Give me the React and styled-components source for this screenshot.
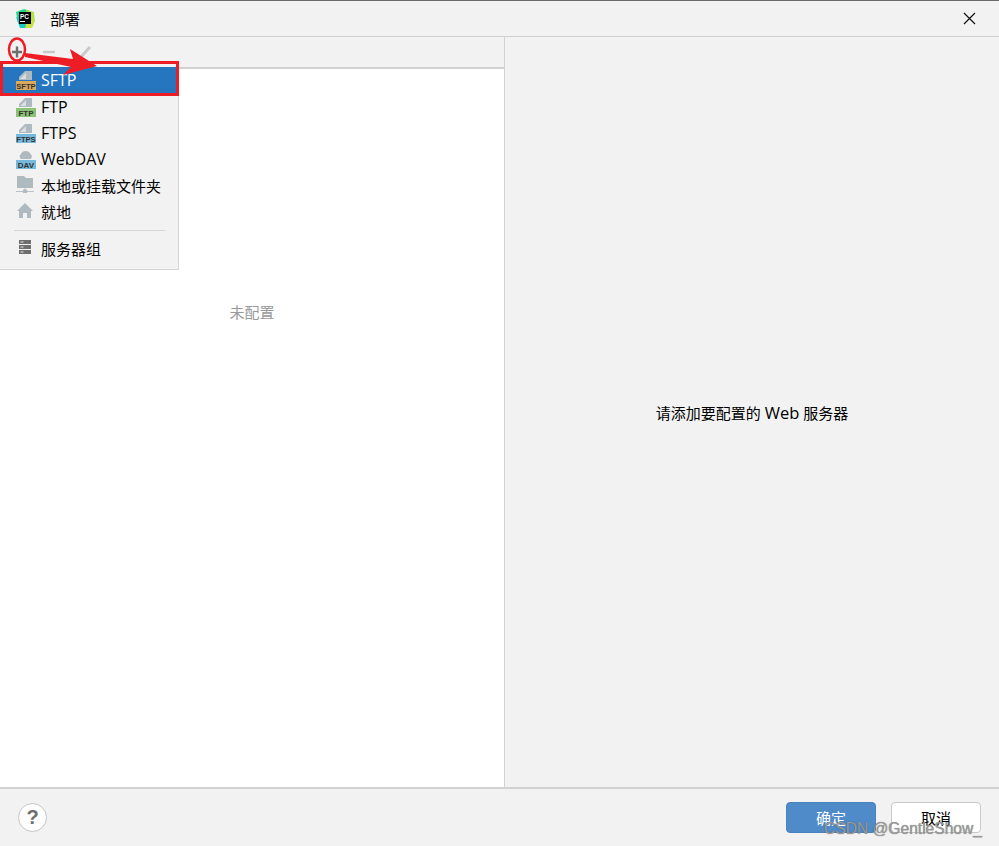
import React from 'react'
import styled, { createGlobalStyle } from 'styled-components'

const GlobalStyle = createGlobalStyle`
  html, body {
    margin: 0;
    padding: 0;
    background: #f2f2f2;
  }
  * {
    box-sizing: border-box;
  }
`

const Dialog = styled.div`
  position: relative;
  width: 999px;
  height: 846px;
  display: flex;
  flex-direction: column;
  overflow: hidden;
  background: #f2f2f2;
  border-top: 1px solid #6b6b6b;
  color: #000;
  font-family: "Open Sans", "Noto Sans CJK SC", sans-serif;
  font-size: 15px;
`

const TitleBar = styled.div`
  height: 36px;
  flex: none;
  display: flex;
  align-items: center;
  padding: 0 23px 0 15px;
  border-bottom: 1px solid #d1d1d1;
`

const TitleText = styled.span`
  margin-left: 15px;
  flex: 1;
`

const Body = styled.div`
  flex: 1;
  display: flex;
  min-height: 0;
`

const LeftPane = styled.div`
  width: 505px;
  flex: none;
  display: flex;
  flex-direction: column;
  border-right: 1px solid #d1d1d1;
`

const Toolbar = styled.div`
  height: 32px;
  flex: none;
  display: flex;
  align-items: center;
  gap: 16px;
  padding-left: 9px;
  border-bottom: 2px solid #d1d1d1;
`

const ServerList = styled.div`
  flex: 1;
  background: #fff;
  padding-top: 232px;
  text-align: center;
  color: #999;
`

const RightPane = styled.div`
  flex: 1;
  display: flex;
  align-items: center;
  justify-content: center;
  white-space: pre;
`

const LatinWord = styled.span`
  font-size: 16.5px;
`

const Footer = styled.div`
  height: 59px;
  flex: none;
  display: flex;
  align-items: center;
  padding: 0 18px;
  border-top: 2px solid #d1d1d1;
`

const HelpButton = styled.div`
  width: 29px;
  height: 29px;
  border: 1.5px solid #c4c4c4;
  border-radius: 50%;
  background: #fff;
  color: #6e6e6e;
  display: flex;
  align-items: center;
  justify-content: center;
  font-family: "Liberation Sans", sans-serif;
  font-weight: 700;
  font-size: 20px;
`

const ButtonRow = styled.div`
  margin-left: auto;
  display: flex;
  gap: 15px;
`

const DialogButton = styled.div`
  width: 90px;
  height: 31px;
  border-radius: 4px;
  display: flex;
  align-items: center;
  justify-content: center;
  border: 1px solid ${p => (p.$primary ? '#4a82bd' : '#c9c9c9')};
  background: ${p => (p.$primary ? '#4f8ac9' : '#fff')};
  color: ${p => (p.$primary ? '#fff' : '#000')};
`

const Menu = styled.div`
  position: absolute;
  left: 0;
  top: 63px;
  width: 179px;
  height: 206px;
  display: flex;
  flex-direction: column;
  padding-top: 3px;
  background: #f2f2f2;
  border-right: 1px solid #d6d6d6;
  border-bottom: 1px solid #d6d6d6;
`

const MenuItem = styled.div`
  height: 26px;
  flex: none;
  display: flex;
  align-items: center;
  gap: 5px;
  padding-left: 16px;
  margin-bottom: ${p => (p.$active ? 1 : 0)}px;
  font-size: ${p => (p.$latin ? 16 : 15)}px;
  background: ${p => (p.$active ? '#2675bf' : 'transparent')};
  color: ${p => (p.$active ? '#fff' : '#000')};
`

const IconSlot = styled.div`
  width: 20px;
  height: 20px;
  flex: none;
  display: flex;
`

const MenuDivider = styled.div`
  height: 1px;
  flex: none;
  margin: 6px 13px 4px 14px;
  background: #d6d6d6;
`

const SelectedFrame = styled.div`
  position: absolute;
  left: 0;
  top: 60px;
  width: 179px;
  height: 35px;
  border: 3px solid #ee1c25;
  pointer-events: none;
`

const Annotation = styled.svg`
  position: absolute;
  left: 0;
  top: -1px;
  pointer-events: none;
`

const Watermark = styled.div`
  position: absolute;
  left: 824px;
  top: 819px;
  font-family: "Liberation Sans", sans-serif;
  font-size: 15.6px;
  color: #9a9a9a;
  text-shadow: 0 0 1px rgba(70, 70, 70, 0.7);
  white-space: nowrap;
`

const PcLogo = () => (
  <svg width="20" height="20" viewBox="0 0 20 20">
    <path d="M1 3 L9 0 L15 2 L14 10 L3 14 Z" fill="#21d789" />
    <path d="M11 1 L19 3 L20 13 L13 12 Z" fill="#b5e04a" />
    <path d="M1 8 L5 19 L13 19 L8 10 Z" fill="#19c9c2" />
    <path d="M13 10 L20 12 L17 19 L10 19 Z" fill="#c8e23f" />
    <rect x="4" y="3" width="12" height="12" fill="#000" />
    <text x="5" y="9.5" fontFamily="Liberation Sans" fontSize="6.4" fontWeight="700" fill="#fff">PC</text>
    <rect x="5" y="12" width="5" height="1" fill="#fff" />
  </svg>
)

const Plus = () => (
  <svg width="16" height="16" viewBox="0 0 16 16">
    <path d="M8 2.5 V13.5 M3 8 H13" stroke="#6e6e6e" strokeWidth="2.4" />
  </svg>
)

const Minus = () => (
  <svg width="16" height="16" viewBox="0 0 16 16">
    <path d="M2 8 H14" stroke="#c9c9c9" strokeWidth="2.4" />
  </svg>
)

const Pencil = () => (
  <svg width="24" height="16" viewBox="0 0 24 16">
    <path d="M7 14 L17 3" stroke="#c9c9c9" strokeWidth="2.8" />
  </svg>
)

const Close = () => (
  <svg width="13" height="13" viewBox="0 0 13 13">
    <path d="M1 1 L12 12 M12 1 L1 12" stroke="#111" strokeWidth="1.2" />
  </svg>
)

const IconLabel = ({ text, color, size = 7.6 }) => (
  <>
    <rect x="0" y="11" width="20" height="9" fill={color} />
    <text x="10" y="18.6" textAnchor="middle" fontFamily="Liberation Sans" fontWeight="700" fontSize={size} fill="#333">{text}</text>
  </>
)

const ServerIcon = ({ label, color, size }) => (
  <svg width="20" height="20" viewBox="0 0 20 20">
    <path d="M3 10 V7 L9 1 H16 V10 Z" fill="#aeb9c0" />
    <path d="M4 9 L10 3 V9 Z" fill="#d9dee1" />
    <IconLabel text={label} color={color} size={size} />
  </svg>
)

const DavIcon = () => (
  <svg width="20" height="20" viewBox="0 0 20 20">
    <path d="M5 10 a3 3 0 0 1 0 -5 a5 4.5 0 0 1 9.5 0 a3 3 0 0 1 0 5 Z" fill="#aeb9c0" />
    <IconLabel text="DAV" color="#75b9dc" size={8} />
  </svg>
)

const FolderIcon = () => (
  <svg width="20" height="20" viewBox="0 0 20 20">
    <path d="M1 1 H8 L10 3 H17 V13 H1 Z" fill="#aeb9c0" />
    <path d="M9 13 V16 M0 16.5 H18" stroke="#b9c2c8" strokeWidth="1" />
    <rect x="7" y="14.5" width="4" height="3.5" fill="#aeb9c0" />
  </svg>
)

const HomeIcon = () => (
  <svg width="20" height="20" viewBox="0 0 20 20">
    <path d="M9 2 L17 10 H15 V17 H11 V12 H7 V17 H3 V10 H1 Z" fill="#aeb9c0" />
  </svg>
)

const GroupIcon = () => (
  <svg width="20" height="20" viewBox="0 0 20 20">
    <rect x="3" y="2" width="12" height="4" fill="#6e6e6e" />
    <rect x="3" y="7" width="12" height="4" fill="#6e6e6e" />
    <rect x="3" y="12" width="12" height="4" fill="#6e6e6e" />
    <path d="M4.5 4 H7.5 M4.5 9 H7.5 M4.5 14 H7.5" stroke="#e4e4e4" strokeWidth="1" />
  </svg>
)

const menuItems = [
  { label: 'FTP', latin: true, icon: <ServerIcon label="FTP" color="#8cc274" size={8} /> },
  { label: 'FTPS', latin: true, icon: <ServerIcon label="FTPS" color="#75b9dc" /> },
  { label: 'WebDAV', latin: true, icon: <DavIcon /> },
  { label: '本地或挂载文件夹', icon: <FolderIcon /> },
  { label: '就地', icon: <HomeIcon /> },
]

const App = () => {
  return (
    <>
      <GlobalStyle />
      <Dialog>
        <TitleBar>
          <PcLogo />
          <TitleText>部署</TitleText>
          <Close />
        </TitleBar>
        <Body>
          <LeftPane>
            <Toolbar>
              <Plus />
              <Minus />
              <Pencil />
            </Toolbar>
            <ServerList>未配置</ServerList>
          </LeftPane>
          <RightPane>
            <span>请添加要配置的 <LatinWord>Web</LatinWord> 服务器</span>
          </RightPane>
        </Body>
        <Footer>
          <HelpButton>?</HelpButton>
          <ButtonRow>
            <DialogButton $primary>确定</DialogButton>
            <DialogButton>取消</DialogButton>
          </ButtonRow>
        </Footer>

        <Menu>
          <MenuItem $active $latin>
            <IconSlot>
              <ServerIcon label="SFTP" color="#dba95c" />
            </IconSlot>
            SFTP
          </MenuItem>
          {menuItems.map(item => (
            <MenuItem key={item.label} $latin={item.latin}>
              <IconSlot>{item.icon}</IconSlot>
              {item.label}
            </MenuItem>
          ))}
          <MenuDivider />
          <MenuItem>
            <IconSlot><GroupIcon /></IconSlot>
            服务器组
          </MenuItem>
        </Menu>
        <SelectedFrame />
        <Annotation width="120" height="80" viewBox="0 0 120 80">
          <ellipse cx="17" cy="49.5" rx="8" ry="11" fill="none" stroke="#ee1c25" strokeWidth="2.5" />
          <path d="M25 53 L73 59 L70 49 L97 66 L63 75 L71 67 L25 57 Z" fill="#ee1c25" />
        </Annotation>
        <Watermark>CSDN @GentleShow_</Watermark>
      </Dialog>
    </>
  )
}

export default App
